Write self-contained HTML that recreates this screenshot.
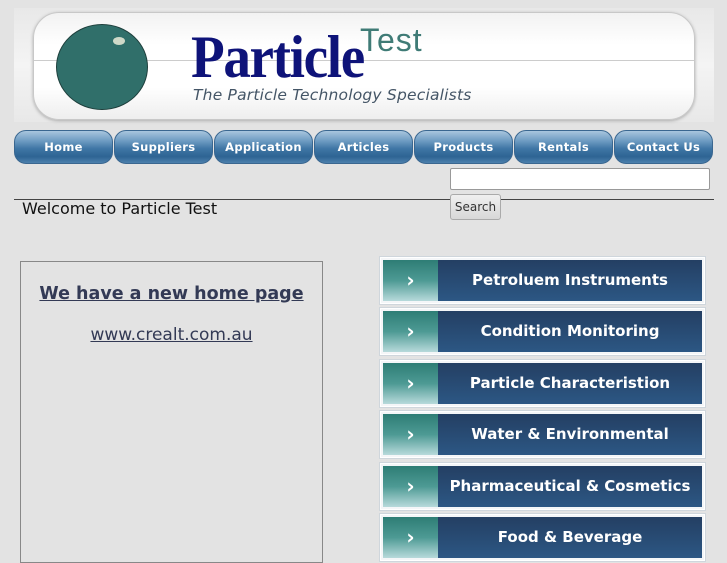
<!DOCTYPE html>
<html><head><style>
body{margin:0;width:727px;height:545px;overflow:hidden;background:#e3e3e3;font-family:"DejaVu Sans","Liberation Sans",sans-serif;position:relative}
.abs{position:absolute}
.hdr{left:14px;top:8px;width:700px;height:114px;background:linear-gradient(#e8e8e8,#f4f4f4 50%,#e8e8e8)}
.inner{left:33px;top:12px;width:660px;height:106px;border-radius:26px;background:linear-gradient(#f2f2f2,#fff 30%,#fff 70%,#eee);border:1px solid #c8c8c8;box-shadow:0 1px 3px #aaa}
.nav{top:130px;height:32px;width:97px;border-radius:12px;border:1px solid #3a6790;background:linear-gradient(#a9c6de,#6f9dc3 30%,#3f76a5 55%,#2e6493 80%,#4c80ad);color:#fff;font-size:11.5px;font-weight:bold;text-align:center;line-height:32px;letter-spacing:.3px}
.side{left:380px;width:323px;height:45px;border:1px solid #fff;outline:1px solid #cfd6dc;background:#f4f6f8}
.side .t{position:absolute;left:2px;top:2px;width:55px;height:41px;background:linear-gradient(#2e7d75,#4d9a94 50%,#b7dadb);color:#fff;font-weight:bold;font-size:20px;text-align:center;line-height:40px}
.side .b{position:absolute;left:57px;top:2px;right:2px;height:41px;background:linear-gradient(#243f63,#2c5784);color:#fff;font-family:"DejaVu Sans",sans-serif;font-weight:bold;font-size:15px;text-align:center;line-height:41px;white-space:nowrap}
</style></head><body>
<div class="abs hdr"></div>
<div class="abs inner"></div>
<div class="abs" style="left:34px;top:60px;width:660px;height:1px;background:#ccc"></div>
<div class="abs" style="left:56px;top:24px;width:90px;height:84px;border-radius:50%;background:#306f6a;border:1px solid #1e3f3c"></div>
<div class="abs" style="left:113px;top:37px;width:12px;height:8px;border-radius:50%;background:#cfd9c8"></div>
<div class="abs" style="left:191px;top:24px;font-family:'Liberation Serif',serif;font-weight:bold;font-size:60px;color:#0e1379;letter-spacing:-1.5px;line-height:66px;transform:scaleX(.92);transform-origin:left">Particle</div>
<div class="abs" style="left:360px;top:22px;font-family:'Liberation Sans',sans-serif;font-size:32px;color:#3f7b76;line-height:36px;letter-spacing:1px">Test</div>
<div class="abs" style="left:193px;top:86px;font-family:'DejaVu Sans',sans-serif;font-style:italic;font-size:15.5px;color:#456;line-height:18px;letter-spacing:.2px">The Particle Technology Specialists</div>
<div class="abs nav" style="left:14px">Home</div>
<div class="abs nav" style="left:114px">Suppliers</div>
<div class="abs nav" style="left:214px">Application</div>
<div class="abs nav" style="left:314px">Articles</div>
<div class="abs nav" style="left:414px">Products</div>
<div class="abs nav" style="left:514px">Rentals</div>
<div class="abs nav" style="left:614px">Contact Us</div>
<div class="abs" style="left:450px;top:168px;width:258px;height:20px;background:#fff;border:1px solid #999;border-radius:2px"></div>
<div class="abs" style="left:14px;top:199px;width:700px;height:1px;background:#444"></div>
<div class="abs" style="left:450px;top:194px;width:49px;height:24px;background:linear-gradient(#f0f0f0,#d8d8d8);border:1px solid #aaa;border-radius:3px;font-size:12px;text-align:center;line-height:24px;color:#333">Search</div>
<div class="abs" style="left:22px;top:200px;font-size:16px;font-weight:500;color:#111;line-height:18px">Welcome to Particle Test</div>
<div class="abs" style="left:20px;top:261px;width:301px;height:300px;border:1px solid #888"></div>
<div class="abs" style="left:20px;top:284px;width:303px;text-align:center;font-size:17.5px;font-weight:bold;color:#333a55;text-decoration:underline">We have a new home page</div>
<div class="abs" style="left:20px;top:325px;width:303px;text-align:center;font-size:17px;color:#333a55;text-decoration:underline">www.crealt.com.au</div>
<div class="abs side" style="top:257px"><div class="t">›</div><div class="b">Petroluem Instruments</div></div>
<div class="abs side" style="top:308px"><div class="t">›</div><div class="b">Condition Monitoring</div></div>
<div class="abs side" style="top:360px"><div class="t">›</div><div class="b">Particle Characteristion</div></div>
<div class="abs side" style="top:411px"><div class="t">›</div><div class="b">Water &amp; Environmental</div></div>
<div class="abs side" style="top:463px"><div class="t">›</div><div class="b">Pharmaceutical &amp; Cosmetics</div></div>
<div class="abs side" style="top:514px"><div class="t">›</div><div class="b">Food &amp; Beverage</div></div>
</body></html>
